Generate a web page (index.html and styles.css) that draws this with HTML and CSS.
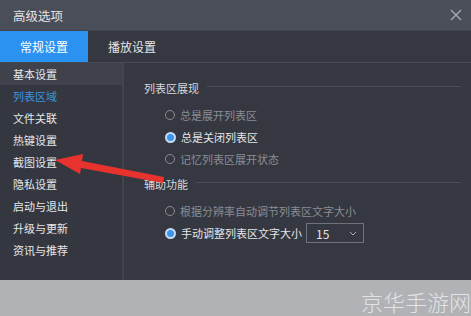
FILE: index.html
```html
<!DOCTYPE html>
<html lang="zh-CN">
<head>
    <meta charset="UTF-8">
    <title>高级选项</title>
    <link rel="stylesheet" href="styles.css">
</head>
<body>
    <div class="dialog">
        <div class="titlebar">
            <span class="title">高级选项</span>
            <svg class="close" width="12" height="12" viewBox="0 0 12 12"><path d="M1 1L11 11M11 1L1 11" stroke="#a9abb1" stroke-width="1.4"/></svg>
        </div>
        <div class="tabs">
            <div class="tab active">常规设置</div>
            <div class="tab">播放设置</div>
        </div>
        <div class="main">
            <ul class="sidebar">
                <li class="current">基本设置</li>
                <li class="link">列表区域</li>
                <li>文件关联</li>
                <li>热键设置</li>
                <li>截图设置</li>
                <li>隐私设置</li>
                <li>启动与退出</li>
                <li>升级与更新</li>
                <li>资讯与推荐</li>
            </ul>
            <div class="content">
                <div class="group-title"><span>列表区展现</span></div>
                <div class="options">
                    <div class="radio off"><i></i>总是展开列表区</div>
                    <div class="radio on"><i></i>总是关闭列表区</div>
                    <div class="radio off"><i></i>记忆列表区展开状态</div>
                </div>
                <div class="group-title"><span>辅助功能</span></div>
                <div class="options">
                    <div class="radio off"><i></i>根据分辨率自动调节列表区文字大小</div>
                    <div class="radio on"><i></i>手动调整列表区文字大小
                        <div class="select">15<svg width="8" height="5" viewBox="0 0 8 5"><path d="M1 1L4 4L7 1" stroke="#a9abb1" fill="none"/></svg></div>
                    </div>
                </div>
            </div>
        </div>
    </div>
    <div class="footer">京华手游网</div>
    <svg class="arrow" width="471" height="316" viewBox="0 0 471 316">
        <path d="M164 177 L163 183 L81 168 L80 174 L55 160 L83 154 L82 161 Z" fill="#e8322e"/>
    </svg>
</body>
</html>
```
FILE: styles.css
```css
body {
    margin: 0;
    width: 471px;
    height: 316px;
    overflow: hidden;
    font-family: "Noto Sans CJK SC", "Noto Sans", sans-serif;
    background: #b1b2b6;
    position: relative;
}
.dialog {
    height: 280px;
    background: #353841;
    display: flex;
    flex-direction: column;
}
.titlebar {
    height: 30px;
    background: #4a4e58;
    border-bottom: 1px solid #41444d;
    display: flex;
    align-items: center;
    justify-content: space-between;
    padding: 0 9px 0 13px;
}
.title {
    color: #e2e3e6;
    font-size: 12.5px;
}
.tabs {
    height: 31px;
    display: flex;
    background: #353841;
    border-bottom: 1px solid #474a53;
}
.tab {
    color: #e4e5e8;
    font-size: 12px;
    line-height: 31px;
    padding: 0 20px;
}
.tab.active {
    background: #2c92f2;
    color: #fff;
    width: 88px;
    box-sizing: border-box;
    text-align: center;
    padding: 0;
}
.main {
    flex: 1;
    display: flex;
}
.sidebar {
    list-style: none;
    margin: 0;
    padding: 0;
    width: 122px;
    border-right: 2px solid #41444c;
    background: #343740;
}
.sidebar li {
    height: 22px;
    line-height: 22px;
    padding-left: 13px;
    color: #e6e7ea;
    font-size: 11px;
}
.sidebar li.current {
    background: #3f424b;
}
.sidebar li.link {
    color: #3a93e0;
}
.content {
    flex: 1;
    padding: 15px 10px 0 20px;
}
.group-title {
    display: flex;
    align-items: center;
    color: #d8d9dd;
    font-size: 11px;
    height: 20px;
}
.group-title::after {
    content: "";
    flex: 1;
    height: 1px;
    background: #4a4d56;
    margin-left: 8px;
    margin-top: -4px;
}
.options {
    padding: 6px 0 4px 21px;
}
.radio {
    display: flex;
    align-items: center;
    height: 22px;
    font-size: 11px;
    color: #e4e5e8;
}
.radio.off {
    color: #8b8d93;
}
.radio i {
    width: 8px;
    height: 8px;
    border-radius: 50%;
    border: 1px solid #8b8d93;
    margin-right: 5px;
    box-sizing: content-box;
}
.radio.on i {
    background: #3a95ee;
    border-color: #c9dcf2;
    width: 7px;
    height: 7px;
    border-width: 2px;
}
.select {
    margin-left: 4px;
    width: 58px;
    height: 20px;
    border: 1px solid #6f727a;
    display: flex;
    align-items: center;
    justify-content: space-between;
    padding: 0 6px 0 9px;
    box-sizing: border-box;
    color: #e4e5e8;
    font-size: 12px;
}
.footer {
    text-align: right;
    color: #e2e3e6;
    font-size: 22px;
    font-weight: 300;
    padding: 5px 0 0;
}
.arrow {
    position: absolute;
    left: 0;
    top: 0;
    pointer-events: none;
}
```
